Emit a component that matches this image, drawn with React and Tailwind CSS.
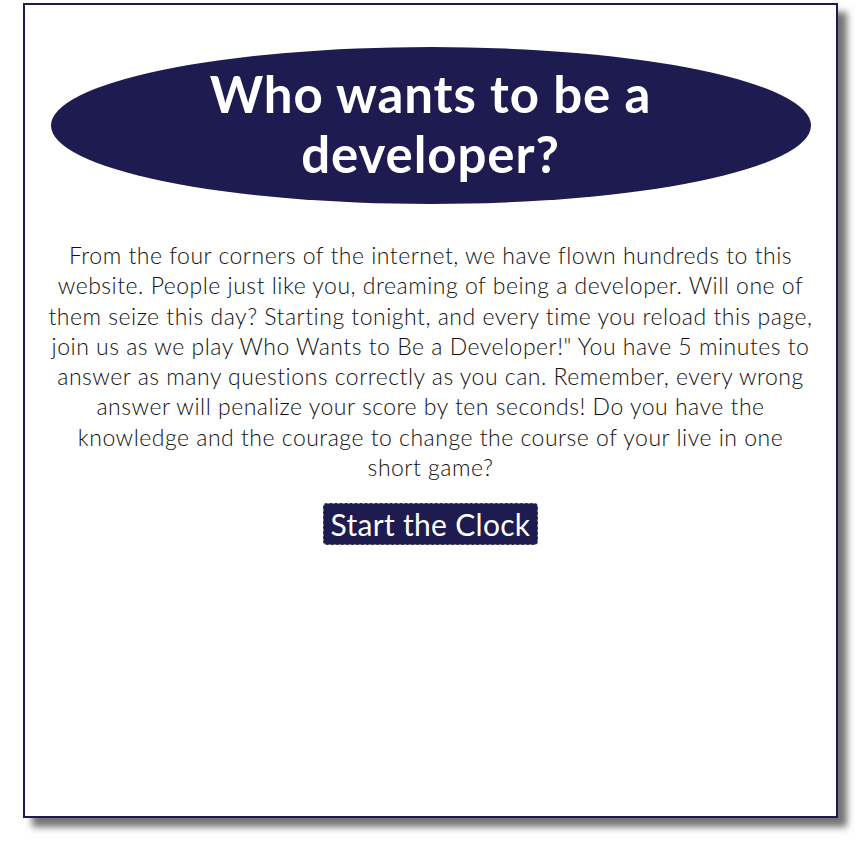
import React from "react";

const lines = [
    "From the four corners of the internet, we have flown hundreds to this",
    "website. People just like you, dreaming of being a developer. Will one of",
    "them seize this day? Starting tonight, and every time you reload this page,",
    "join us as we play Who Wants to Be a Developer!\" You have 5 minutes to",
    "answer as many questions correctly as you can. Remember, every wrong",
    "answer will penalize your score by ten seconds! Do you have the",
    "knowledge and the courage to change the course of your live in one",
    "short game?",
];

const App = () => {
    return (
        <div className="min-h-[846px] bg-white pt-[3px] pl-[23px]" style={{ fontFamily: "Lato, 'Open Sans', sans-serif" }}>
            <div className="w-[815px] h-[815px] border-2 border-[#1c1a4f] bg-white shadow-[9px_9px_7px_rgba(0,0,0,0.55)] flex flex-col items-center">
                <div className="mt-[42px] w-[760px] h-[157px] rounded-[50%] bg-[#1e1b50] flex items-center justify-center">
                    <h1 className="text-white font-bold text-[51px] leading-[60px] text-center tracking-[0.9px] -mt-[4px]">
                        Who wants to be a
                        <br />
                        developer?
                    </h1>
                </div>

                <p className="mt-[36px] text-center text-[23px] leading-[30.3px] font-light tracking-[0.5px] text-[#111]">
                    {lines.map((line, i) => (
                        <React.Fragment key={i}>
                            {line}
                            {i < lines.length - 1 && <br />}
                        </React.Fragment>
                    ))}
                </p>

                <button className="mt-[21px] bg-[#1e1b50] text-white text-[30px] leading-[40px] px-[7px] tracking-[0.3px] rounded-[4px] border border-dashed border-[#888]">
                    Start the Clock
                </button>
            </div>
        </div>
    );
};

export default App;
